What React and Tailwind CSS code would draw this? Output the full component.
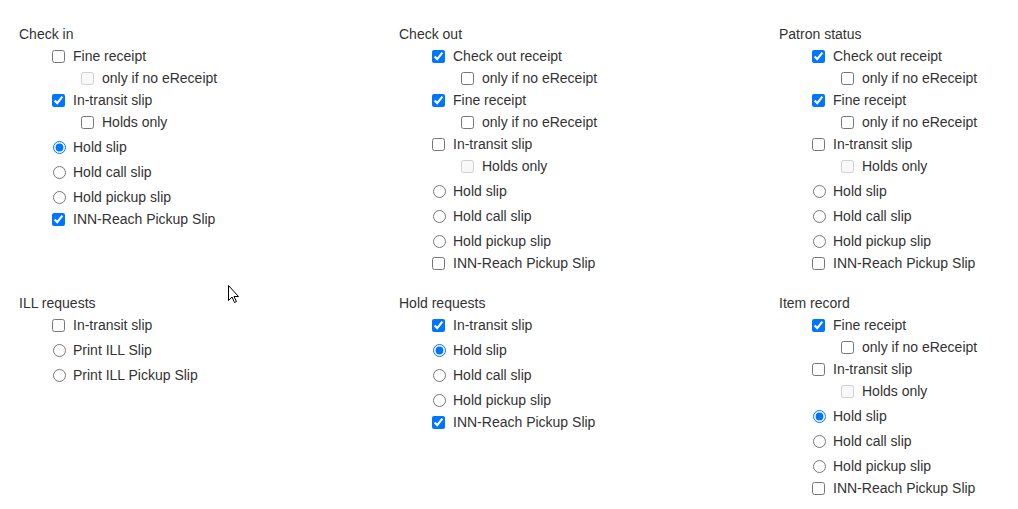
import React from 'react'

const sections = [
  {
    title: 'Check in',
    items: [
      { t: 'cb', label: 'Fine receipt' },
      { t: 'cb', label: 'only if no eReceipt', sub: true, disabled: true },
      { t: 'cb', label: 'In-transit slip', checked: true },
      { t: 'cb', label: 'Holds only', sub: true },
      { t: 'radio', label: 'Hold slip', checked: true },
      { t: 'radio', label: 'Hold call slip' },
      { t: 'radio', label: 'Hold pickup slip' },
      { t: 'cb', label: 'INN-Reach Pickup Slip', checked: true },
    ],
  },
  {
    title: 'Check out',
    items: [
      { t: 'cb', label: 'Check out receipt', checked: true },
      { t: 'cb', label: 'only if no eReceipt', sub: true },
      { t: 'cb', label: 'Fine receipt', checked: true },
      { t: 'cb', label: 'only if no eReceipt', sub: true },
      { t: 'cb', label: 'In-transit slip' },
      { t: 'cb', label: 'Holds only', sub: true, disabled: true },
      { t: 'radio', label: 'Hold slip' },
      { t: 'radio', label: 'Hold call slip' },
      { t: 'radio', label: 'Hold pickup slip' },
      { t: 'cb', label: 'INN-Reach Pickup Slip' },
    ],
  },
  {
    title: 'Patron status',
    items: [
      { t: 'cb', label: 'Check out receipt', checked: true },
      { t: 'cb', label: 'only if no eReceipt', sub: true },
      { t: 'cb', label: 'Fine receipt', checked: true },
      { t: 'cb', label: 'only if no eReceipt', sub: true },
      { t: 'cb', label: 'In-transit slip' },
      { t: 'cb', label: 'Holds only', sub: true, disabled: true },
      { t: 'radio', label: 'Hold slip' },
      { t: 'radio', label: 'Hold call slip' },
      { t: 'radio', label: 'Hold pickup slip' },
      { t: 'cb', label: 'INN-Reach Pickup Slip' },
    ],
  },
  {
    title: 'ILL requests',
    items: [
      { t: 'cb', label: 'In-transit slip' },
      { t: 'radio', label: 'Print ILL Slip' },
      { t: 'radio', label: 'Print ILL Pickup Slip' },
    ],
  },
  {
    title: 'Hold requests',
    items: [
      { t: 'cb', label: 'In-transit slip', checked: true },
      { t: 'radio', label: 'Hold slip', checked: true },
      { t: 'radio', label: 'Hold call slip' },
      { t: 'radio', label: 'Hold pickup slip' },
      { t: 'cb', label: 'INN-Reach Pickup Slip', checked: true },
    ],
  },
  {
    title: 'Item record',
    items: [
      { t: 'cb', label: 'Fine receipt', checked: true },
      { t: 'cb', label: 'only if no eReceipt', sub: true },
      { t: 'cb', label: 'In-transit slip' },
      { t: 'cb', label: 'Holds only', sub: true, disabled: true },
      { t: 'radio', label: 'Hold slip', checked: true },
      { t: 'radio', label: 'Hold call slip' },
      { t: 'radio', label: 'Hold pickup slip' },
      { t: 'cb', label: 'INN-Reach Pickup Slip' },
    ],
  },
]

function Row({ item, name }) {
  if (item.t === 'radio') {
    return (
      <label className="flex items-center h-[25px] pt-[3px] pl-[5px]">
        <input type="radio" name={name} defaultChecked={item.checked} className="w-[13px] h-[13px] m-0" />
        <span className="ml-[7px]">{item.label}</span>
      </label>
    )
  }
  return (
    <label className={'flex items-center h-[22px] pl-[4px] ' + (item.sub ? 'ml-[29px]' : '')}>
      <input type="checkbox" defaultChecked={item.checked} disabled={item.disabled} className="w-[13px] h-[13px] m-0" />
      <span className="ml-[8px]">{item.label}</span>
    </label>
  )
}

function Section({ s, idx }) {
  return (
    <div>
      <div className="h-[22px] flex items-center">{s.title}</div>
      <div className="pl-[29px]">
        {s.items.map((it, i) => (
          <Row key={i} item={it} name={'sec' + idx} />
        ))}
      </div>
    </div>
  )
}

export default function App() {
  return (
    <div className="relative w-[1018px] h-[509px] bg-white text-[14px] text-[#333] overflow-hidden" style={{ fontFamily: '"Liberation Sans", Arial, sans-serif' }}>
      <div className="grid grid-cols-[380px_380px_1fr] gap-y-[18px] pl-[19px] pt-[23px]">
        {sections.map((s, i) => (
          <Section key={i} s={s} idx={i} />
        ))}
      </div>
      <svg className="absolute left-[228px] top-[285px]" width="13" height="19" viewBox="0 0 13 19">
        <path d="M0.5 0.5 L0.5 15.5 L4 12 L6.5 17.5 L8.5 16.5 L6 11.5 L10.5 11.5 Z" fill="#fff" stroke="#000" strokeWidth="1" />
      </svg>
    </div>
  )
}
